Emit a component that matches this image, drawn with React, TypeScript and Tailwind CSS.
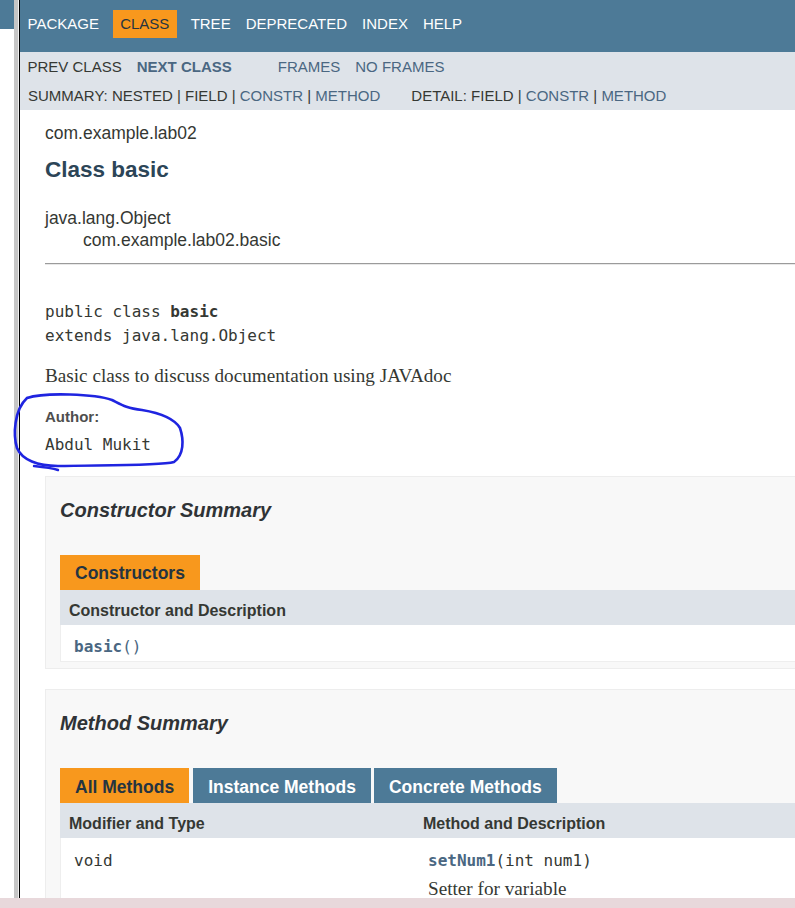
import React from "react";

const mono = "font-['DejaVu_Sans_Mono','Liberation_Mono',monospace]";
const serif = "font-['Liberation_Serif','Times_New_Roman',serif]";

function TopNav() {
  return (
    <div className="h-[52px] bg-[#4D7A97] pt-[10px] shrink-0">
      <div className="flex h-[28px] text-[15px] text-white">
        <div className="flex items-center px-[7.5px]">PACKAGE</div>
        <div className="flex items-center px-[7.5px] mx-[6.25px] bg-[#F8981D] text-[#253441]">CLASS</div>
        <div className="flex items-center px-[7.5px]">TREE</div>
        <div className="flex items-center px-[7.5px]">DEPRECATED</div>
        <div className="flex items-center px-[7.5px]">INDEX</div>
        <div className="flex items-center px-[7.5px]">HELP</div>
      </div>
    </div>
  );
}

function SubNav() {
  const link = "text-[#4A6782]";
  return (
    <div className="h-[58px] bg-[#dee3e9] text-[15px] text-[#353833] shrink-0">
      <div className="flex h-[30px] items-center">
        <div className="px-[7.5px]">PREV CLASS</div>
        <div className={`px-[7.5px] font-bold ${link}`}>NEXT CLASS</div>
        <div className={`ml-[31px] px-[7.5px] ${link}`}>FRAMES</div>
        <div className={`px-[7.5px] ${link}`}>NO FRAMES</div>
      </div>
      <div className="flex h-[28px] items-center whitespace-pre">
        <div className="pl-[8px]">
          SUMMARY: NESTED | FIELD | <span className={link}>CONSTR</span> | <span className={link}>METHOD</span>
        </div>
        <div className="ml-[31px]">
          DETAIL: FIELD | <span className={link}>CONSTR</span> | <span className={link}>METHOD</span>
        </div>
      </div>
    </div>
  );
}

function Header() {
  return (
    <>
      <div className="mt-[11px] h-[24px] leading-[24px] text-[17.5px]">com.example.lab02</div>
      <h2 className="mt-[10px] h-[30px] leading-[30px] text-[22.5px] font-bold text-[#2c4557]">Class basic</h2>
      <div className="mt-[22px] h-[22px] leading-[22px] text-[17.5px]">java.lang.Object</div>
      <div className="h-[22px] leading-[22px] text-[17.5px] pl-[38px]">com.example.lab02.basic</div>
      <div className="mt-[12px] h-[1px] bg-[#9b9b9b]" />
      <div className="h-[1px] bg-[#e8e8e8]" />
    </>
  );
}

function Description() {
  return (
    <>
      <div className={`mt-[35px] ${mono} text-[16px] leading-[24px]`}>
        <div>
          public class <span className="font-bold">basic</span>
        </div>
        <div>extends java.lang.Object</div>
      </div>
      <div className={`mt-[16px] ${serif} text-[19.2px] leading-[24px]`}>
        Basic class to discuss documentation using JAVAdoc
      </div>
      <div className="mt-[19px] h-[20px] leading-[20px] text-[15px] font-bold text-[#4E4E4E]">Author:</div>
      <div className={`mt-[6px] ${mono} text-[16px] leading-[24px]`}>Abdul Mukit</div>
    </>
  );
}

function ConstructorSummary() {
  return (
    <div className="mt-[19px] -mr-[30px] border border-[#ededed] bg-[#f8f8f8] pl-[14px] pb-[6px]">
      <h3 className="mt-[19px] h-[28px] leading-[28px] text-[20px] italic font-bold text-[#2f3336]">
        Constructor Summary
      </h3>
      <div className="mt-[31px] flex">
        <div className="h-[35px] flex items-center pt-[2px] px-[15px] bg-[#F8981D] text-[17.5px] font-bold text-[#253441]">
          Constructors
        </div>
      </div>
      <div className="h-[35px] flex items-center pt-[7px] pl-[9px] bg-[#dee3e9] text-[16px] font-bold text-[#353833]">
        Constructor and Description
      </div>
      <div className={`h-[37px] pt-[10px] pl-[13px] leading-[24px] bg-white border-x border-b border-[#eeeeee] ${mono} text-[16px] text-[#4A6782]`}>
        <span className="font-bold">basic</span>
        <span>()</span>
      </div>
    </div>
  );
}

function MethodSummary() {
  return (
    <div className="mt-[20px] -mr-[30px] border border-[#ededed] bg-[#f8f8f8] pl-[14px] pb-[6px]">
      <h3 className="mt-[19px] h-[28px] leading-[28px] text-[20px] italic font-bold text-[#2f3336]">
        Method Summary
      </h3>
      <div className="mt-[31px] flex text-[17.5px] font-bold">
        <div className="h-[35px] flex items-center pt-[3px] px-[15px] mr-[4px] bg-[#F8981D] text-[#253441]">All Methods</div>
        <div className="h-[35px] flex items-center pt-[3px] px-[15px] mr-[3px] bg-[#4D7A97] text-white">Instance Methods</div>
        <div className="h-[35px] flex items-center pt-[3px] px-[15px] bg-[#4D7A97] text-white">Concrete Methods</div>
      </div>
      <div className="h-[35px] flex items-center pt-[7px] bg-[#dee3e9] text-[16px] font-bold text-[#353833]">
        <div className="w-[354px] pl-[9px]">Modifier and Type</div>
        <div className="pl-[9px]">Method and Description</div>
      </div>
      <div className="flex bg-white border-x border-b border-[#eeeeee] pt-[11px] pb-[8px]">
        <div className={`w-[354px] pl-[13px] ${mono} text-[16px] leading-[24px] text-[#353833]`}>void</div>
        <div className="pl-[13px]">
          <div className={`${mono} text-[16px] leading-[24px] text-[#353833]`}>
            <span className="font-bold text-[#4A6782]">setNum1</span>(int num1)
          </div>
          <div className={`mt-[4px] ${serif} text-[19.2px] leading-[24px] text-[#353833]`}>Setter for variable</div>
        </div>
      </div>
    </div>
  );
}

export default function App() {
  return (
    <div className="relative flex flex-col w-[795px] h-[908px] overflow-hidden bg-white font-['Liberation_Sans',Arial,sans-serif] text-[#353833]">
      <div className="flex flex-1 min-h-0">
        <div className="w-[14px] shrink-0">
          <div className="h-[29px] bg-[#4D7A97]" />
        </div>
        <div className="w-[4px] shrink-0 bg-[#c6c6c6]" />
        <div className="w-[1px] shrink-0 bg-[#f0f0f0]" />
        <div className="w-[1px] shrink-0 bg-black" />
        <div className="flex-1 min-w-0 overflow-hidden flex flex-col">
          <TopNav />
          <SubNav />
          <div className="pl-[25px] flex flex-col">
            <Header />
            <Description />
            <ConstructorSummary />
            <MethodSummary />
          </div>
        </div>
      </div>
      <div className="h-[10px] shrink-0 bg-[#e8d8db]" />
      <svg
        className="absolute left-0 top-0 pointer-events-none"
        width="795"
        height="908"
        viewBox="0 0 795 908"
        fill="none"
      >
        <path
          d="M 27 398 C 45 392, 95 394, 112 400 C 122 405, 126 408, 142 410 C 160 413, 174 418, 180 428 C 184 440, 184 455, 174 462 C 160 466, 100 465, 58 466 C 38 466, 22 460, 17 448 C 13 435, 14 410, 27 398"
          stroke="#1f24e0"
          strokeWidth="2.6"
          strokeLinecap="round"
          strokeLinejoin="round"
        />
        <path d="M 34 466 C 44 467, 52 468, 58 470" stroke="#1f24e0" strokeWidth="2.4" strokeLinecap="round" />
      </svg>
    </div>
  );
}
